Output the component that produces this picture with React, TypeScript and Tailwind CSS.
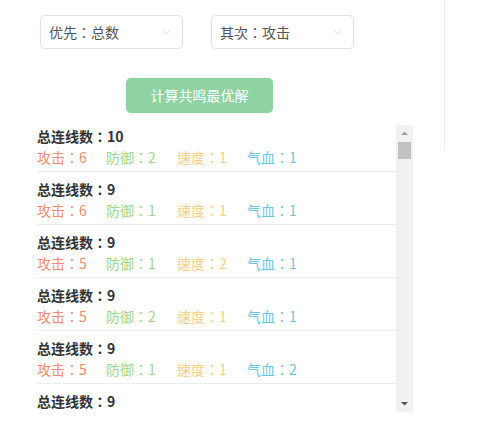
import { ChevronDown } from 'lucide-react';

interface Combo {
  total: number;
  atk: number;
  def: number;
  spd: number;
  hp: number;
}

const combos: Combo[] = [
  { total: 10, atk: 6, def: 2, spd: 1, hp: 1 },
  { total: 9, atk: 6, def: 1, spd: 1, hp: 1 },
  { total: 9, atk: 5, def: 1, spd: 2, hp: 1 },
  { total: 9, atk: 5, def: 2, spd: 1, hp: 1 },
  { total: 9, atk: 5, def: 1, spd: 1, hp: 2 },
  { total: 9, atk: 5, def: 1, spd: 1, hp: 1 },
];

function Select({ label }: { label: string }) {
  return (
    <div className="flex h-[34px] w-[143px] items-center justify-between rounded-[5px] border border-[#e3e3e3] bg-white pl-[8px] pr-[10px] shadow-[0_0_2px_rgba(0,0,0,0.06)]">
      <span className="text-[14px] text-[#555]">{label}</span>
      <ChevronDown className="h-[11px] w-[11px] text-[#c8c8c8]" strokeWidth={1.5} />
    </div>
  );
}

export default function App() {
  return (
    <div
      className="flex h-[425px] w-[483px] bg-white"
      style={{ fontFamily: '"Noto Sans CJK TC", "Noto Sans CJK SC", sans-serif' }}
    >
      <div className="w-[444px]">
        <div className="ml-[40px] mt-[15px] flex gap-[28px]">
          <Select label="优先：总数" />
          <Select label="其次：攻击" />
        </div>

        <button className="ml-[126px] mt-[29px] flex h-[35px] w-[147px] items-center justify-center rounded-[5px] bg-[#8fd3a2] text-[14px] text-white shadow-[0_0_2px_rgba(0,0,0,0.1)]">
          计算共鸣最优解
        </button>

        <div className="ml-[37px] mt-[12px] flex h-[287px] w-[376px]">
          <div className="flex-1 overflow-hidden">
            <div className="-mt-[6px]">
              {combos.map((c, i) => (
                <div key={i} className="h-[53px] border-b border-[#ececec] pt-[7px]">
                  <div className="h-[20px] text-[14px] font-bold leading-[20px] text-[#333]">
                    总连线数：{c.total}
                  </div>
                  <div className="flex h-[22px] text-[14px] leading-[22px]">
                    <span className="w-[69px] text-[#ef8d70]">攻击：{c.atk}</span>
                    <span className="w-[71px] text-[#9bd887]">防御：{c.def}</span>
                    <span className="w-[70px] text-[#f4cf87]">速度：{c.spd}</span>
                    <span className="text-[#6fc4e0]">气血：{c.hp}</span>
                  </div>
                </div>
              ))}
            </div>
          </div>
          <div className="flex w-[17px] flex-col items-center bg-[#f1f1f1]">
            <svg width="17" height="17" viewBox="0 0 17 17" className="shrink-0">
              <path d="M5 10 L8.5 6.5 L12 10 Z" fill="#a3a3a3" />
            </svg>
            <div className="h-[17px] w-[13px] bg-[#c1c1c1]" />
            <div className="flex-1" />
            <svg width="17" height="17" viewBox="0 0 17 17" className="shrink-0">
              <path d="M5 7 L8.5 10.5 L12 7 Z" fill="#505050" />
            </svg>
          </div>
        </div>
      </div>
      <div className="h-[150px] w-px bg-[#ededed]" />
    </div>
  );
}
